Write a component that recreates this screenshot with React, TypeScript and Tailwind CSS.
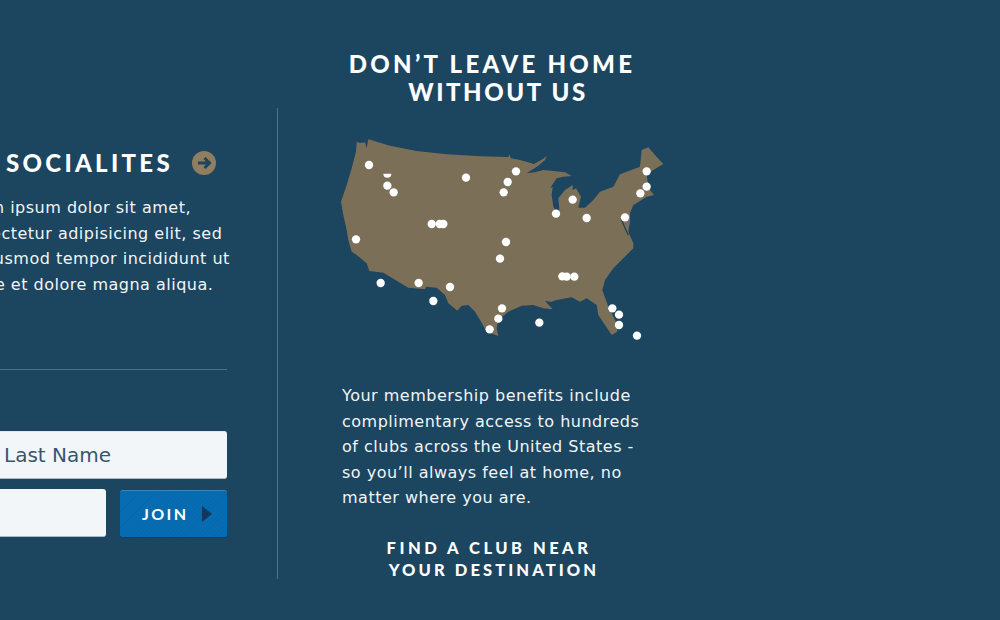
const dots: [number, number][] = [
  [117, 105], [172, 167], [191, 187], [408, 143], [558, 124], [533, 156], [521, 187],
  [728, 209], [678, 251], [770, 264], [950, 124], [950, 170], [931, 190], [885, 262],
  [305, 282], [329, 282], [340, 282], [78, 328], [528, 336], [510, 386], [697, 439],
  [710, 440], [733, 440], [152, 459], [266, 459], [360, 471], [310, 513], [516, 535],
  [505, 566], [479, 598], [628, 578], [847, 535], [867, 554], [867, 585], [921, 617],
];

const usOutline =
  "M80 35 L90 39 L105 37 L110 55 L115 28 L180 47 L260 63 L350 73 L450 79 L535 81 L538 73 L543 85 L570 90 L600 98 L612 102 L640 86 L650 78 L645 90 L624 108 L590 130 L615 127 L640 120 L670 123 L705 127 L725 138 L700 140 L680 145 L660 175 L668 170 L665 195 L670 230 L680 247 L688 237 L685 205 L705 180 L728 165 L728 180 L738 175 L753 200 L745 233 L765 233 L790 210 L810 185 L850 170 L870 133 L930 110 L935 60 L955 52 L975 75 L1000 102 L970 120 L950 135 L955 165 L960 180 L972 195 L950 200 L935 210 L910 225 L900 250 L900 275 L895 305 L910 340 L910 355 L880 385 L850 415 L825 450 L817 480 L835 530 L860 580 L862 605 L845 615 L825 585 L805 555 L800 525 L770 505 L750 515 L725 502 L680 510 L665 515 L645 513 L668 538 L640 535 L610 525 L575 527 L535 545 L505 570 L500 595 L505 618 L470 605 L450 570 L435 545 L415 525 L395 527 L382 542 L355 520 L345 495 L320 473 L288 470 L285 478 L235 473 L160 428 L118 423 L110 400 L80 375 L65 365 L55 330 L50 300 L40 255 L33 215 L50 165 L65 115 L78 65 Z";

function UsMap() {
  return (
    <svg viewBox="0 0 1020 660" className="block h-[220px] w-[340px]">
      <path d={usOutline} fill="#7b6f58" />
      <path d="M875 270 L884 292 L895 316" fill="none" stroke="#1c4560" strokeWidth={4} />
      <g className="blur-[0.4px]" fill="#ffffff">
        <path d="M160 131 H184 A12 12 0 0 1 160 131 Z" />
        {dots.map(([cx, cy]) => (
          <circle key={`${cx}-${cy}`} cx={cx} cy={cy} r={12.5} />
        ))}
      </g>
    </svg>
  );
}

export default function App() {
  return (
    <div className="flex h-[620px] w-[1000px] overflow-hidden bg-[#1c4560] font-['DejaVu_Sans',sans-serif] text-base leading-[25.5px] tracking-[0.5px] text-[#f1f5f7]">
      <section className="ml-[-45px] w-[272px] shrink-0 pt-[149px]">
        <div className="ml-[51px] flex items-center">
          <h2 className="font-['Lato',sans-serif] text-[24px] leading-[28px] font-black tracking-[3.3px] text-white">
            SOCIALITES
          </h2>
          <span className="ml-[19px] flex h-6 w-6 items-center justify-center rounded-full bg-[#8f7f60]">
            <svg viewBox="0 0 24 24" className="h-6 w-6" fill="none" stroke="#1c4560" strokeWidth={3}>
              <path d="M6 12 H17 M12.5 7 L17.5 12 L12.5 17" />
            </svg>
          </span>
        </div>
        <p className="mt-[18px] ml-[-3px] w-[288px]">
          Lorem ipsum dolor sit amet, consectetur adipisicing elit, sed do eiusmod tempor incididunt ut labore et dolore magna aliqua.
        </p>
        <div className="mt-[72px] h-px bg-[#4c6f8a]" />
        <div className="mt-[61px] flex h-12 items-center rounded-[3px] border-t border-b border-t-[#dfe7ec] border-b-[#a9bac5] bg-[#f2f6f8] pt-px pl-[49px] text-[20px] tracking-normal text-[#36566f]">
          Last Name
        </div>
        <div className="mt-[10px] flex gap-[14px]">
          <div className="h-12 w-[151px] rounded-[3px] border-b border-[#a9bac5] bg-[#f2f6f8]" />
          <button
            type="button"
            className="mt-px flex h-12 w-[107px] items-center rounded-[3px] border-t border-b border-t-[#3d86bd] border-b-[#0d3f66] bg-[#066db3] bg-[repeating-linear-gradient(135deg,transparent_0,transparent_2px,rgba(0,40,90,0.06)_2px,rgba(0,40,90,0.06)_3px)] pl-[22px] text-[16px] tracking-[2.4px] text-white"
          >
            <span className="font-['Lato',sans-serif] font-bold">JOIN</span>
            <svg viewBox="0 0 10 16" className="ml-[14px] h-4 w-[10px]">
              <path d="M0 0 L10 8 L0 16 Z" fill="#12395a" />
            </svg>
          </button>
        </div>
      </section>

      <div className="mt-[108px] ml-[50px] h-[471px] w-px bg-[#4c6f8a]" />

      <section className="ml-[64px] w-[300px] pt-[50px]">
        <h1 className="text-center font-['Lato',sans-serif] text-[24px] leading-[28px] font-black tracking-[3.3px] text-white">
          <span className="block">DON’T LEAVE HOME</span>
          <span className="block pl-[12px] tracking-[2.6px]">WITHOUT US</span>
        </h1>
        <div className="mt-[24px] ml-[-12px]">
          <UsMap />
        </div>
        <p className="mt-[33px]">
          Your membership benefits include complimentary access to hundreds of clubs across the United States - so you’ll always feel at home, no matter where you are.
        </p>
        <p className="mt-[26px] text-center font-['Lato',sans-serif] text-[16.5px] leading-[22px] font-black tracking-[3.1px] text-white">
          <span className="block pr-[6px] tracking-[3.5px]">FIND A CLUB NEAR</span>
          <span className="block pl-[4px]">YOUR DESTINATION</span>
        </p>
      </section>
    </div>
  );
}
